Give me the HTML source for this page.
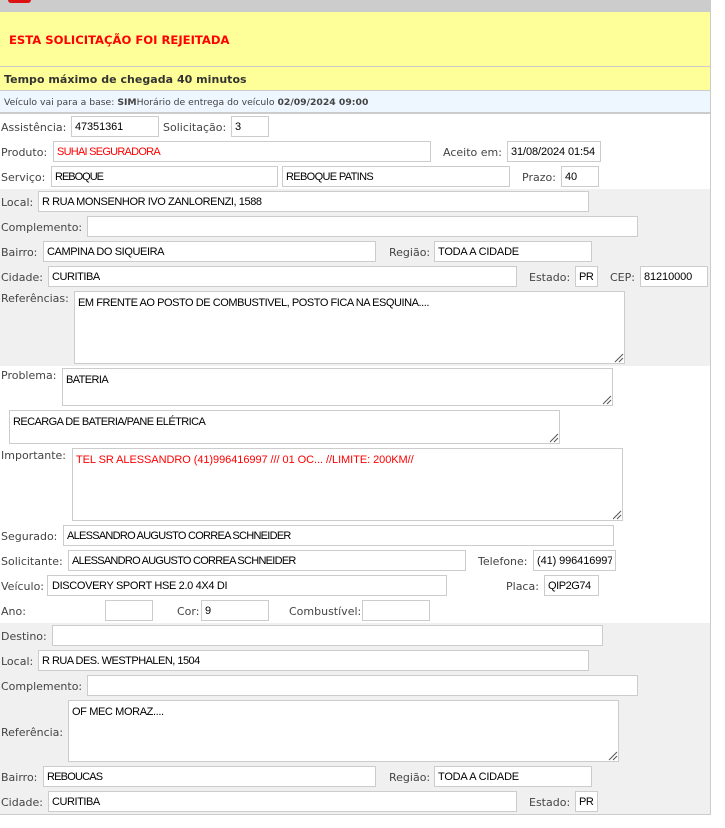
<!DOCTYPE html>
<html lang="pt-BR"><head><meta charset="utf-8"><title>Solicitação</title>
<style>
html,body{margin:0;padding:0;background:#fff}
body{width:725px;height:828px;position:relative;overflow:hidden;font-family:"DejaVu Sans","Liberation Sans",sans-serif}
div{position:absolute;box-sizing:border-box}
.l{font-size:11px;color:#444;white-space:nowrap;line-height:12px;margin-top:1px}
.f{background:#fff;border:1px solid #ccc;font-family:"Liberation Sans",sans-serif;font-size:11px;letter-spacing:-.45px;color:#000;padding:0 3px;line-height:21px;white-space:nowrap;overflow:hidden;height:21px}
.d{letter-spacing:-.1px}
.n{letter-spacing:-.73px}
.c{letter-spacing:-.8px}
.t{line-height:13px;padding:5px 3px;}
.t svg{position:absolute;right:0;bottom:0}
.r{color:#f00}
.g{background:#f0f0f0;left:0;width:710px}
</style></head><body>
<div style="left:0;top:0;width:711px;height:12px;background:#ccc"></div>
<div style="left:8px;top:0;width:23px;height:3px;background:#d11;border-radius:0 0 6px 6px"></div>
<div style="left:0;top:12px;width:710px;height:54px;background:#ff9"></div>
<div style="left:0;top:66px;width:710px;height:1px;background:#ccc"></div>
<div style="left:0;top:67px;width:710px;height:23px;background:#ff9"></div>
<div style="left:0;top:90px;width:710px;height:1px;background:#ccc"></div>
<div style="left:0;top:91px;width:710px;height:21px;background:#eef6ff"></div>
<div style="left:0;top:112px;width:710px;height:2px;background:#ccc"></div>
<div class="g" style="top:189px;height:177px"></div>
<div class="g" style="top:623px;height:191px"></div>
<div style="left:0;top:814px;width:711px;height:1px;background:#ccc"></div>
<div style="left:710px;top:12px;width:1px;height:803px;background:#ccc"></div>

<div style="left:9px;top:33px;font-size:11.6px;line-height:14px;font-weight:bold;color:#f00;white-space:nowrap">ESTA SOLICITAÇÃO FOI REJEITADA</div>
<div style="left:4px;top:73px;font-size:11px;line-height:14px;font-weight:bold;color:#333;white-space:nowrap;letter-spacing:.03px">Tempo máximo de chegada 40 minutos</div>
<div style="left:4px;top:96px;font-size:9.25px;line-height:13px;color:#444;white-space:nowrap">Veículo vai para a base: <b>SIM</b>Horário de entrega do veículo <b>02/09/2024 09:00</b></div>

<div class="l" style="left:1px;top:121px">Assistência:</div>
<div class="f d" style="left:71px;top:116px;width:88px">47351361</div>
<div class="l" style="left:163px;top:121px">Solicitação:</div>
<div class="f d" style="left:231px;top:116px;width:38px">3</div>

<div class="l" style="left:1px;top:146px">Produto:</div>
<div class="f r" style="left:53px;top:141px;width:378px;letter-spacing:-.75px">SUHAI SEGURADORA</div>
<div class="l" style="left:443px;top:146px">Aceito em:</div>
<div class="f d" style="left:507px;top:141px;width:94px">31/08/2024 01:54</div>

<div class="l" style="left:1px;top:171px">Serviço:</div>
<div class="f" style="left:51px;top:166px;width:227px;letter-spacing:-1px">REBOQUE</div>
<div class="f" style="left:282px;top:166px;width:228px;letter-spacing:-.65px">REBOQUE PATINS</div>
<div class="l" style="left:522px;top:171px">Prazo:</div>
<div class="f d" style="left:561px;top:166px;width:38px">40</div>

<div class="l" style="left:1px;top:196px">Local:</div>
<div class="f" style="left:38px;top:191px;width:551px;letter-spacing:-.42px">R RUA MONSENHOR IVO ZANLORENZI, 1588</div>
<div class="l" style="left:1px;top:221px">Complemento:</div>
<div class="f" style="left:87px;top:216px;width:551px"></div>
<div class="l" style="left:1px;top:246px">Bairro:</div>
<div class="f" style="left:43px;top:241px;width:333px;letter-spacing:-.4px">CAMPINA DO SIQUEIRA</div>
<div class="l" style="left:389px;top:246px">Região:</div>
<div class="f" style="left:434px;top:241px;width:158px;letter-spacing:-.2px">TODA A CIDADE</div>
<div class="l" style="left:1px;top:271px">Cidade:</div>
<div class="f" style="left:48px;top:266px;width:469px">CURITIBA</div>
<div class="l" style="left:529px;top:271px">Estado:</div>
<div class="f" style="left:575px;top:266px;width:23px">PR</div>
<div class="l" style="left:610px;top:271px">CEP:</div>
<div class="f d" style="left:640px;top:266px;width:68px">81210000</div>

<div class="l" style="left:1px;top:292px">Referências:</div>
<div class="f t" style="left:74px;top:291px;width:551px;height:73px">EM FRENTE AO POSTO DE COMBUSTIVEL, POSTO FICA NA ESQUINA....<svg width="10" height="10" viewBox="0 0 10 10"><path d="M1 9L9 1M5 9L9 5" stroke="#555" fill="none"/></svg></div>

<div class="l" style="left:1px;top:369px">Problema:</div>
<div class="f t" style="left:62px;top:368px;width:551px;height:38px;letter-spacing:-.6px">BATERIA<svg width="10" height="10" viewBox="0 0 10 10"><path d="M1 9L9 1M5 9L9 5" stroke="#555" fill="none"/></svg></div>
<div class="f t" style="left:9px;top:410px;width:551px;height:34px;letter-spacing:-.57px">RECARGA DE BATERIA/PANE ELÉTRICA<svg width="10" height="10" viewBox="0 0 10 10"><path d="M1 9L9 1M5 9L9 5" stroke="#555" fill="none"/></svg></div>
<div class="l" style="left:1px;top:449px">Importante:</div>
<div class="f t r" style="left:72px;top:448px;width:551px;height:73px;letter-spacing:-.06px">TEL SR ALESSANDRO (41)996416997 /// 01 OC... //LIMITE: 200KM//<svg width="10" height="10" viewBox="0 0 10 10"><path d="M1 9L9 1M5 9L9 5" stroke="#555" fill="none"/></svg></div>

<div class="l" style="left:1px;top:530px">Segurado:</div>
<div class="f n" style="left:63px;top:525px;width:551px">ALESSANDRO AUGUSTO CORREA SCHNEIDER</div>
<div class="l" style="left:1px;top:555px">Solicitante:</div>
<div class="f n" style="left:68px;top:550px;width:398px">ALESSANDRO AUGUSTO CORREA SCHNEIDER</div>
<div class="l" style="left:478px;top:555px">Telefone:</div>
<div class="f d" style="left:533px;top:550px;width:83px">(41) 996416997<div style="right:0;top:0;width:3px;height:19px;background:#fff"></div></div>
<div class="l" style="left:1px;top:580px">Veículo:</div>
<div class="f" style="left:47px;top:575px;width:400px;letter-spacing:-.35px;padding-left:4px">DISCOVERY SPORT HSE 2.0 4X4 DI</div>
<div class="l" style="left:506px;top:580px">Placa:</div>
<div class="f" style="left:544px;top:575px;width:55px">QIP2G74</div>
<div class="l" style="left:1px;top:605px">Ano:</div>
<div class="f" style="left:105px;top:600px;width:48px"></div>
<div class="l" style="left:177px;top:605px">Cor:</div>
<div class="f d" style="left:201px;top:600px;width:68px">9</div>
<div class="l" style="left:289px;top:605px">Combustível:</div>
<div class="f" style="left:362px;top:600px;width:68px"></div>

<div class="l" style="left:1px;top:630px">Destino:</div>
<div class="f" style="left:52px;top:625px;width:551px"></div>
<div class="l" style="left:1px;top:655px">Local:</div>
<div class="f" style="left:38px;top:650px;width:551px;letter-spacing:-.52px">R RUA DES. WESTPHALEN, 1504</div>
<div class="l" style="left:1px;top:680px">Complemento:</div>
<div class="f" style="left:87px;top:675px;width:551px"></div>
<div class="l" style="left:1px;top:726px">Referência:</div>
<div class="f t" style="left:68px;top:700px;width:551px;height:62px;letter-spacing:-.38px">OF MEC MORAZ....<svg width="10" height="10" viewBox="0 0 10 10"><path d="M1 9L9 1M5 9L9 5" stroke="#555" fill="none"/></svg></div>
<div class="l" style="left:1px;top:771px">Bairro:</div>
<div class="f c" style="left:43px;top:766px;width:333px">REBOUCAS</div>
<div class="l" style="left:389px;top:771px">Região:</div>
<div class="f" style="left:434px;top:766px;width:158px;letter-spacing:-.2px">TODA A CIDADE</div>
<div class="l" style="left:1px;top:796px">Cidade:</div>
<div class="f" style="left:48px;top:791px;width:469px">CURITIBA</div>
<div class="l" style="left:529px;top:796px">Estado:</div>
<div class="f" style="left:575px;top:791px;width:23px">PR</div>
</body></html>
